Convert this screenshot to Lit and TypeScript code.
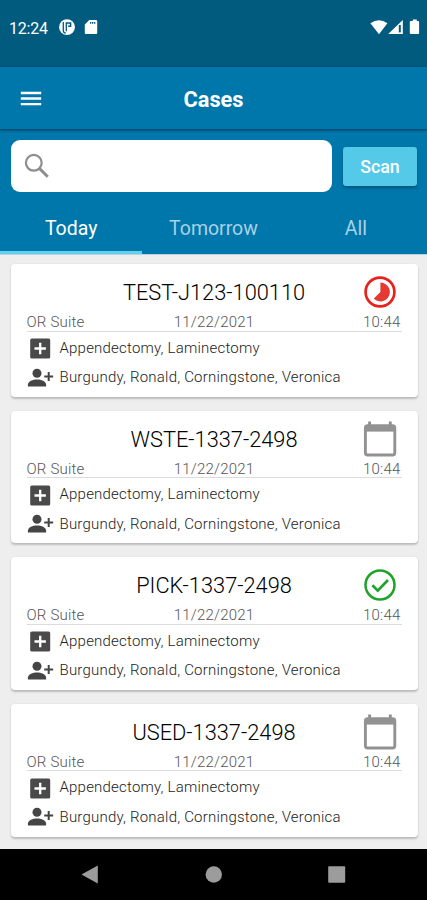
import { LitElement, html, css, svg } from "lit";
import { customElement, property } from "lit/decorators.js";

type Status = "progress" | "scheduled" | "done";

interface CaseInfo {
  id: string;
  status: Status;
}

const CASES: CaseInfo[] = [
  { id: "TEST-J123-100110", status: "progress" },
  { id: "WSTE-1337-2498", status: "scheduled" },
  { id: "PICK-1337-2498", status: "done" },
  { id: "USED-1337-2498", status: "scheduled" },
];

const STATUS_ICONS = {
  progress: svg`
    <circle cx="19" cy="19" r="14.4" fill="none" stroke="#e8211c" stroke-width="2.7"/>
    <path d="M19.4 9.6a9.4 9.400 0 1 1-6.600 16L19.400 19z" fill="#e53a33"/>`,
  scheduled: svg`
    <path d="M8.6 1.5v4M29.3 1.5v4" stroke="#8c8c8c" stroke-width="2.8"/>
    <rect x="4.4" y="5.6" width="29.4" height="29.4" rx="2.2" fill="none" stroke="#929292" stroke-width="2.9"/>
    <path d="M4 5h30v6.6H4z" fill="#929292"/>`,
  done: svg`
    <circle cx="19" cy="19" r="14.5" fill="none" stroke="#1ea32b" stroke-width="2.5"/>
    <path d="M11.4 19.3l5.3 5.3L27 14" fill="none" stroke="#1ea32b" stroke-width="2.7"/>`,
};

@customElement("case-card")
export class CaseCard extends LitElement {
  @property({ attribute: false }) info!: CaseInfo;

  static styles = css`
    :host {
      display: block;
      box-sizing: border-box;
      height: 132.6px;
      padding: 0 16px;
      border-radius: 4px;
      background: #fff;
      box-shadow: 0 2px 2px rgba(0, 0, 0, 0.2), 0 0 2px rgba(0, 0, 0, 0.08);
      color: #444;
      font-size: 15px;
      font-weight: 300;
    }
    .head {
      display: grid;
      grid-template-columns: 38px 1fr 38px;
      height: 49px;
    }
    .title {
      grid-column: 2;
      margin-top: 15px;
      text-align: center;
      font-size: 21.8px;
      line-height: 28px;
      color: #000;
      white-space: nowrap;
    }
    .status {
      width: 38px;
      height: 38px;
      margin: 9px 0 0 -3px;
    }
    .meta {
      display: grid;
      grid-template-columns: 1fr auto 1fr;
      height: 17.5px;
      line-height: 19px;
      letter-spacing: 0.2px;
      border-bottom: 1px solid #dcdcdc;
      color: #555;
    }
    .time {
      text-align: right;
      padding-right: 1px;
    }
    .row {
      display: flex;
      align-items: center;
      height: 30px;
      line-height: 20px;
      letter-spacing: 0.21px;
      color: #222;
      white-space: nowrap;
    }
    .meta + .row {
      margin-top: 1.5px;
    }
    .row + .row {
      margin-top: -0.5px;
    }
    .icon {
      width: 28px;
      height: 28px;
      margin-right: 5px;
      flex: none;
    }
    .text {
      margin-top: -1px;
    }
  `;

  render() {
    return html`
      <div class="head">
        <div class="title">${this.info.id}</div>
        <svg class="status" viewBox="0 0 38 38">${STATUS_ICONS[this.info.status]}</svg>
      </div>
      <div class="meta">
        <span>OR Suite</span><span>11/22/2021</span><span class="time">10:44</span>
      </div>
      <div class="row">
        <svg class="icon" viewBox="0 0 28 28">
          <rect x="3.200" y="4.500" width="20" height="20" rx="1.600" fill="#4a4a4a"/>
          <path d="M13.200 8.800v11.400M7.500 14.500h11.400" stroke="#fff" stroke-width="2.3"/>
        </svg>
        <span class="text">Appendectomy, Laminectomy</span>
      </div>
      <div class="row">
        <svg class="icon" viewBox="0 0 28 28">
          <circle cx="10" cy="9.200" r="4.5" fill="#454545"/>
          <path d="M.9 22.6v-2c0-3.3 5-5.1 9.1-5.1s9.1 1.8 9.1 5.1v2z" fill="#454545"/>
          <path d="M21.700 8v9M17.200 12.5h9" stroke="#454545" stroke-width="2"/>
        </svg>
        <span class="text">Burgundy, Ronald, Corningstone, Veronica</span>
      </div>
    `;
  }
}

@customElement("app-root")
export class AppRoot extends LitElement {
  static styles = css`
    :host {
      display: flex;
      flex-direction: column;
      height: 900px;
      overflow: hidden;
      background: #eee;
      font-family: Roboto, "Liberation Sans", sans-serif;
      color: #fff;
    }
    .status-bar {
      flex: none;
      display: flex;
      box-sizing: border-box;
      height: 67px;
      padding: 17px 7px 0 9px;
      background: #005b7f;
      font-size: 16px;
      line-height: 23px;
    }
    .clock {
      width: 48px;
      letter-spacing: -0.2px;
    }
    .notices {
      width: 44px;
      height: 22px;
    }
    .signals {
      width: 52px;
      height: 22px;
      margin-left: auto;
    }
    .toolbar {
      flex: none;
      display: grid;
      grid-template-columns: 40px 1fr 40px;
      align-items: center;
      height: 62px;
      padding: 0 10px;
      background: #0077ab;
      box-shadow: 0 1px 3px rgba(0, 30, 50, 0.75);
      z-index: 1;
    }
    .menu {
      width: 42px;
      height: 30px;
    }
    .heading {
      text-align: center;
      font-size: 21.8px;
      font-weight: 700;
      line-height: 30px;
      margin-top: 4px;
    }
    .panel {
      flex: none;
      height: 125.5px;
      background: #0077ab;
      border-bottom: 1px solid #b9d2e2;
      box-sizing: border-box;
    }
    .search-row {
      display: flex;
      align-items: center;
      gap: 11px;
      padding: 11px 10px 0 11px;
    }
    .search {
      flex: 1;
      height: 52px;
      border-radius: 9px;
      background: #fff;
    }
    .lens {
      display: block;
      width: 52px;
      height: 52px;
    }
    .scan {
      width: 74px;
      height: 39px;
      border-radius: 3px;
      background: #55c9e8;
      box-shadow: 0 2px 3px rgba(0, 30, 60, 0.4);
      font-size: 17.8px;
      font-weight: 500;
      line-height: 39px;
      text-align: center;
    }
    .tabs {
      display: grid;
      grid-template-columns: repeat(3, 1fr);
      height: 61.5px;
      font-size: 19.500px;
      line-height: 73px;
      text-align: center;
      color: #a9d1e5;
    }
    .tab {
      box-sizing: border-box;
      height: 62px;
    }
    .active {
      color: #fff;
      border-bottom: 3px solid #62cfec;
    }
    .list {
      flex: 1;
      display: flex;
      flex-direction: column;
      gap: 14px;
      padding: 9.7px 9.5px 0 10.5px;
      overflow: hidden;
    }
    .nav {
      flex: none;
      height: 51px;
      background: #000;
    }
    .nav-icons {
      display: block;
      width: 427px;
      height: 51px;
    }
  `;

  render() {
    return html`
      <div class="status-bar">
        <span class="clock">12:24</span>
        <svg class="notices" viewBox="0 0 44 22">
          <circle cx="10" cy="10.2" r="7.9" fill="#fff"/>
          <path d="M6.300 5v8.500c0 1.600 1 2.500 2.400 2.500M9.300 5.800v8.500" fill="none" stroke="#005b7f" stroke-width="1.3"/>
          <path d="M8.800 6h4.800v3.200h-2.400" fill="none" stroke="#005b7f" stroke-width="1.500"/>
          <path d="M32.3 3H39a1.2 1.2 0 0 1 1.2 1.2v12A1 1 0 0 1 39.2 17h-10.400a1 1 0 0 1-1-1V7.400z" fill="#fff"/>
          <path d="M33 5.800h5.600" stroke="#005b7f" stroke-width="1.8" stroke-dasharray="1.300 .7"/>
        </svg>
        <svg class="signals" viewBox="0 0 52 22">
          <path d="M2.400 6.200Q11 .2 19.400 6.200L11 17.300z" fill="#fff"/>
          <path d="M34.800 3v14H20.200z" fill="#fff"/>
          <path d="M31.800 8v7.400" stroke="#005b7f" stroke-width="2"/>
          <path d="M44.800 2.500h4v1.600h1.300a1 1 0 0 1 1 1V16a1 1 0 0 1-1 1h-7.300a1 1 0 0 1-1-1V5.100a1 1 0 0 1 1-1h2z" fill="#fff"/>
        </svg>
      </div>
      <div class="toolbar">
        <svg class="menu" viewBox="0 0 42 30">
          <path d="M10.800 10h20.400M10.800 15.500h20.400M10.800 21.200h20.400" stroke="#fff" stroke-width="2.300"/>
        </svg>
        <div class="heading">Cases</div>
      </div>
      <div class="panel">
        <div class="search-row">
          <div class="search">
            <svg class="lens" viewBox="0 0 52 52" fill="none" stroke="#8d8d8d">
              <circle cx="22.800" cy="22.800" r="7.900" stroke-width="2.200"/>
              <path d="M28.600 28.600l8.200 8.200" stroke-width="2.900"/>
            </svg>
          </div>
          <div class="scan">Scan</div>
        </div>
        <div class="tabs">
          <div class="tab active">Today</div>
          <div class="tab">Tomorrow</div>
          <div class="tab">All</div>
        </div>
      </div>
      <div class="list">
        ${CASES.map((c) => html`<case-card .info=${c}></case-card>`)}
      </div>
      <div class="nav">
        <svg class="nav-icons" viewBox="0 0 427 51" fill="#9c9c9c">
          <path d="M97.800 16.500v18L81.500 25.500z"/>
          <circle cx="213.800" cy="25.500" r="8.200"/>
          <rect x="328.200" y="17.200" width="17" height="16.600" rx="1"/>
        </svg>
      </div>
    `;
  }
}
